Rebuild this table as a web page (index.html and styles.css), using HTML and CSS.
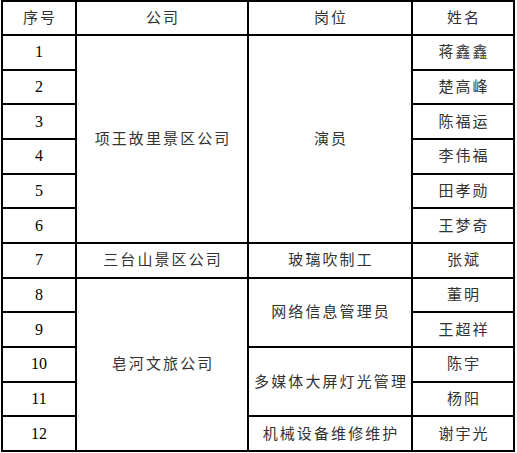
FILE: index.html
```html
<!DOCTYPE html>
<html lang="zh-CN">
<head>
<meta charset="utf-8">
<title>人员名单</title>
<link rel="stylesheet" href="styles.css">
</head>
<body>
<table class="roster">
  <colgroup>
    <col class="c-no">
    <col class="c-co">
    <col class="c-post">
    <col class="c-name">
  </colgroup>
  <thead>
    <tr class="head">
      <th>序号</th>
      <th>公司</th>
      <th>岗位</th>
      <th>姓名</th>
    </tr>
  </thead>
  <tbody>
    <tr><td class="num">1</td><td rowspan="6">项王故里景区公司</td><td rowspan="6">演员</td><td>蒋鑫鑫</td></tr>
    <tr><td class="num">2</td><td>楚高峰</td></tr>
    <tr><td class="num">3</td><td>陈福运</td></tr>
    <tr><td class="num">4</td><td>李伟福</td></tr>
    <tr><td class="num">5</td><td>田孝勋</td></tr>
    <tr><td class="num">6</td><td>王梦奇</td></tr>
    <tr><td class="num">7</td><td>三台山景区公司</td><td>玻璃吹制工</td><td>张斌</td></tr>
    <tr><td class="num">8</td><td rowspan="5">皂河文旅公司</td><td rowspan="2">网络信息管理员</td><td>董明</td></tr>
    <tr><td class="num">9</td><td>王超祥</td></tr>
    <tr><td class="num">10</td><td rowspan="2">多媒体大屏灯光管理</td><td>陈宇</td></tr>
    <tr><td class="num">11</td><td>杨阳</td></tr>
    <tr><td class="num">12</td><td>机械设备维修维护</td><td>谢宇光</td></tr>
  </tbody>
</table>
</body>
</html>
```
FILE: styles.css
```css
html, body {
  margin: 0;
  padding: 0;
  background: #fff;
}

.roster {
  border-collapse: collapse;
  table-layout: fixed;
  margin: 0 0 0 1px;
  width: 512px;
  font-family: "Liberation Serif", "Noto Sans CJK SC", serif;
  color: #333;
}

.c-no { width: 74px; }
.c-co { width: 172px; }
.c-post { width: 164px; }
.c-name { width: 102px; }

.roster th,
.roster td {
  border: 2px solid #000;
  padding: 0 0 0 2.1px;
  text-align: center;
  vertical-align: middle;
  font-weight: normal;
  font-size: 15px;
  letter-spacing: 2.1px;
  line-height: 18px;
}

.roster .head {
  height: 34px;
}

.roster tbody tr {
  height: 34.67px;
}

.roster td.num {
  font-size: 16px;
  letter-spacing: 0;
  padding: 0;
  color: #000;
}
```
